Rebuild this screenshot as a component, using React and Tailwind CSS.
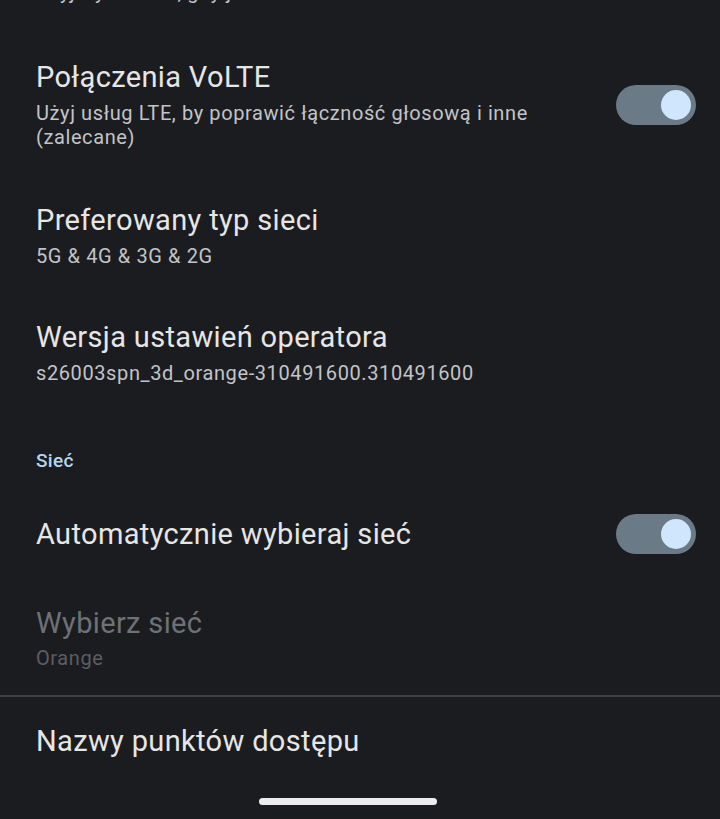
function Toggle() {
  return (
    <div className="flex h-[40px] w-[80px] shrink-0 items-center justify-end rounded-full bg-[#6a7a86] pr-[5px]">
      <div className="h-[30px] w-[30px] rounded-full bg-[#cfe6fd]" />
    </div>
  );
}

function Title({ children, disabled }) {
  return (
    <div className={`text-[29px] leading-[34px] tracking-[0.35px] ${disabled ? 'text-[#6e7175]' : 'text-[#e6e6e6]'}`}>
      {children}
    </div>
  );
}

function Sub({ children, disabled, className = '' }) {
  return (
    <div className={`text-[20px] leading-[24px] tracking-[0.6px] ${disabled ? 'text-[#5b5e62]' : 'text-[#c2c4c7]'} ${className}`}>
      {children}
    </div>
  );
}

export default function App() {
  return (
    <div
      className="flex h-[819px] w-[720px] flex-col overflow-hidden bg-[#1b1c1f] pl-[36px] pr-[24px]"
      style={{ fontFamily: 'Roboto, "Noto Sans", sans-serif' }}
    >
      {/* cut-off text of the previous item */}
      <div className="h-[5px] overflow-hidden">
        <div className="-mt-[20px] text-[20px] leading-[24px] tracking-[0.5px] text-[#c2c4c7]">Użyj trybu sieci, gdy jest</div>
      </div>

      <div className="mt-[55px] flex items-center justify-between">
        <div>
          <Title>Połączenia VoLTE</Title>
          <Sub className="mt-[7px]">
            Użyj usług LTE, by poprawić łączność głosową i inne
            <br />
            (zalecane)
          </Sub>
        </div>
        <Toggle />
      </div>

      <div className="mt-[54px]">
        <Title>Preferowany typ sieci</Title>
        <Sub className="mt-[7px]">5G &amp; 4G &amp; 3G &amp; 2G</Sub>
      </div>

      <div className="mt-[52px]">
        <Title>Wersja ustawień operatora</Title>
        <Sub className="mt-[7px]">s26003spn_3d_orange-310491600.310491600</Sub>
      </div>

      <div className="mt-[64px] text-[19px] font-medium leading-[24px] tracking-[0.3px] text-[#b5d6f2]">Sieć</div>

      <div className="mt-[41px] flex items-center justify-between">
        <Title>Automatycznie wybieraj sieć</Title>
        <Toggle />
      </div>

      <div className="mt-[52px]">
        <Title disabled>Wybierz sieć</Title>
        <Sub disabled className="mt-[6px]">Orange</Sub>
      </div>

      <div className="-ml-[36px] -mr-[24px] mt-[25px] h-[2px] bg-[#3d3f43]" />

      <div className="mt-[27px]">
        <Title>Nazwy punktów dostępu</Title>
      </div>

      <div className="mt-[40px] flex justify-center pr-[12px]">
        <div className="-ml-[24px] h-[7px] w-[178px] rounded-full bg-[#ececec]" />
      </div>
    </div>
  );
}
